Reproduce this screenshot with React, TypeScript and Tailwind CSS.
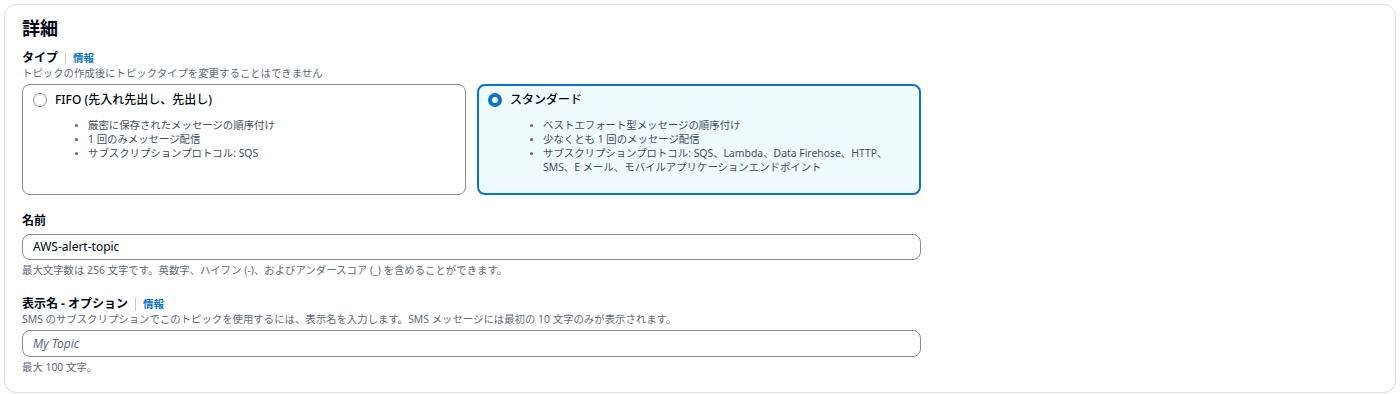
import React from "react";

type Option = {
  key: string;
  label: string;
  items: React.ReactNode[];
};

const options: Option[] = [
  {
    key: "fifo",
    label: "FIFO (先入れ先出し、先出し)",
    items: [
      "厳密に保存されたメッセージの順序付け",
      "1 回のみメッセージ配信",
      "サブスクリプションプロトコル: SQS",
    ],
  },
  {
    key: "standard",
    label: "スタンダード",
    items: [
      "ベストエフォート型メッセージの順序付け",
      "少なくとも 1 回のメッセージ配信",
      <>
        サブスクリプションプロトコル: SQS、Lambda、Data Firehose、HTTP、
        <br />
        SMS、E メール、モバイルアプリケーションエンドポイント
      </>,
    ],
  },
];

function Radio({ checked }: { checked: boolean }) {
  if (checked) {
    return <span className="block h-[14px] w-[14px] shrink-0 rounded-full border-[4px] border-[#0972d3] bg-white" />;
  }
  return <span className="block h-[14px] w-[14px] shrink-0 rounded-full border-[1.5px] border-[#8c8c94] bg-white" />;
}

function Label({ text, info }: { text: string; info?: boolean }) {
  return (
    <div className="flex h-[16px] items-center text-[12px] font-bold leading-[16px] text-[#000716]">
      <span>{text}</span>
      {info && (
        <>
          <span className="mx-[7px] h-[13px] w-px bg-[#c6c6cd]" />
          <span className="text-[10.5px] font-bold text-[#0972d3]">情報</span>
        </>
      )}
    </div>
  );
}

export default function App() {
  const selected = "standard";
  return (
    <div className="min-h-[394px] bg-white p-1 font-['Noto_Sans','Noto_Sans_CJK_JP',sans-serif] text-[#000716]">
      <div className="rounded-xl border border-[#dcdce1] bg-white pb-[18px] pl-[17px] pt-[12px]">
        <h2 className="text-[18px] font-bold leading-[22px]">詳細</h2>

        <div className="mt-[11px]">
          <Label text="タイプ" info />
        </div>
        <p className="text-[10.4px] leading-[14px] text-[#5f6b7a]">
          トピックの作成後にトピックタイプを変更することはできません
        </p>

        <div className="mt-[4px] grid w-[899px] grid-cols-2 gap-[11px]">
          {options.map((o) => {
            const on = o.key === selected;
            return (
              <div
                key={o.key}
                className={
                  on
                    ? "h-[111px] rounded-lg border-2 border-[#0972d3] bg-[#f0fbff] px-[9px] pt-[6px]"
                    : "h-[111px] rounded-lg border border-[#8c8c94] bg-white px-[10px] pt-[7px]"
                }
              >
                <div className="flex h-[16px] items-center gap-[8px]">
                  <Radio checked={on} />
                  <span className="text-[12px] font-medium leading-[16px] text-[#000716]">{o.label}</span>
                </div>
                <ul className="ml-[42px] mt-[10px]">
                  {o.items.map((it, i) => (
                    <li key={i} className="flex text-[10.4px] leading-[14px] text-[#414d5c]">
                      <span className="mr-[10px] mt-[6px] block h-[3px] w-[3px] shrink-0 rounded-full bg-[#5f6b7a]" />
                      <span>{it}</span>
                    </li>
                  ))}
                </ul>
              </div>
            );
          })}
        </div>

        <div className="mt-[18px]">
          <Label text="名前" />
        </div>
        <div className="mt-[5px] flex h-[26px] w-[899px] items-center rounded-lg border border-[#8c8c94] bg-white px-[10px] text-[12px] text-[#000716]">
          AWS-alert-topic
        </div>
        <p className="mt-[3px] text-[10.4px] leading-[14px] text-[#5f6b7a]">
          最大文字数は 256 文字です。英数字、ハイフン (-)、およびアンダースコア (_) を含めることができます。
        </p>

        <div className="mt-[19px]">
          <Label text="表示名 - オプション" info />
        </div>
        <p className="text-[10.4px] leading-[14px] text-[#5f6b7a]">
          SMS のサブスクリプションでこのトピックを使用するには、表示名を入力します。SMS メッセージには最初の 10 文字のみが表示されます。
        </p>
        <div className="mt-[4px] flex h-[27px] w-[899px] items-center rounded-lg border border-[#8c8c94] bg-white px-[10px] text-[12px] italic text-[#5f6b7a]">
          My Topic
        </div>
        <p className="mt-[3px] text-[10.4px] leading-[14px] text-[#5f6b7a]">最大 100 文字。</p>
      </div>
    </div>
  );
}
